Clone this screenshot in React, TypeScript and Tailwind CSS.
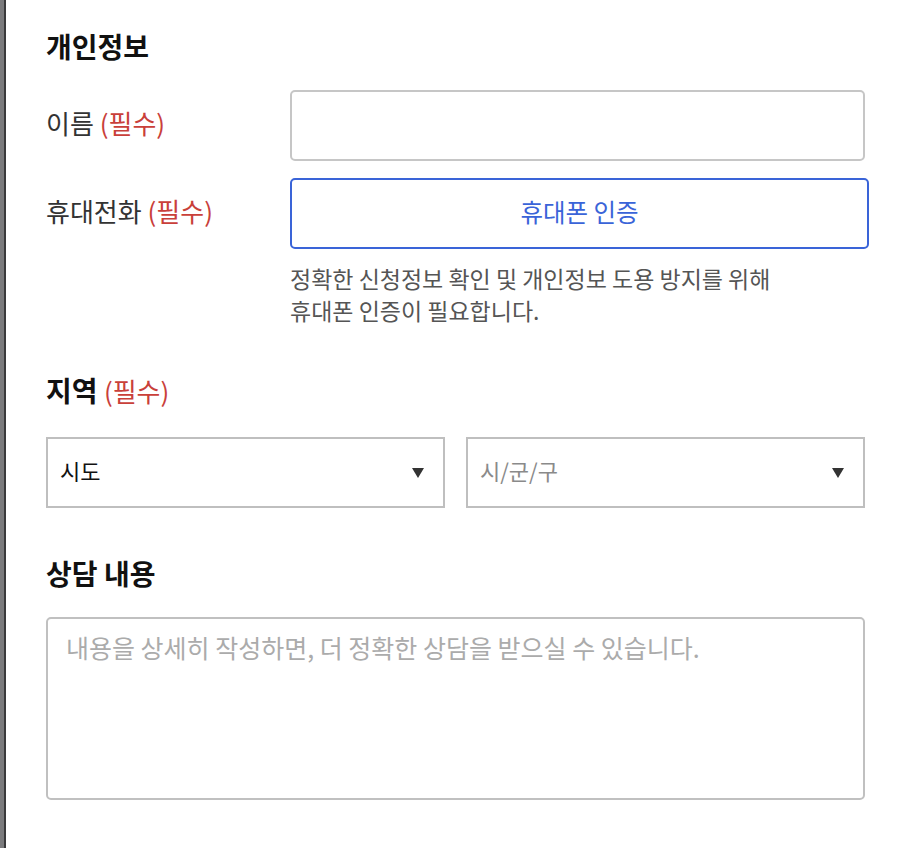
import { useState } from 'react';

const FONT = "font-['Noto_Sans_CJK_KR','Noto_Sans',sans-serif]";

function Required() {
  return <span className="font-normal text-[#c9403a]">(필수)</span>;
}

function SelectBox({ value, placeholder }: { value?: string; placeholder: string }) {
  return (
    <button
      type="button"
      className="flex-1 h-[71px] border-2 border-[#bfbfbf] bg-white flex items-center justify-between pl-[12px] pr-[19px] text-left"
    >
      <span className={`text-[22px] leading-[32px] pb-[5px] ${value ? 'text-[#111]' : 'text-[#8a8a8a]'}`}>
        {value ?? placeholder}
      </span>
      <svg width="12" height="10" viewBox="0 0 12 10" className="shrink-0">
        <path d="M0 0 H12 L6 10 Z" fill="#333" />
      </svg>
    </button>
  );
}

export default function App() {
  const [name, setName] = useState('');
  const [memo, setMemo] = useState('');

  return (
    <div className={`flex min-h-screen bg-white ${FONT}`}>
      {/* backdrop edge */}
      <div className="w-[6px] shrink-0 bg-[#7b7b7d] border-r-2 border-[#3a3a3c]" />

      <div className="pl-[40px] pt-[30px] w-[870px]">
        <h2 className="text-[28px] leading-[32px] font-bold text-[#111]">개인정보</h2>

        {/* 이름 */}
        <div className="mt-[28px] flex items-center">
          <label className="w-[244px] pb-[6px] text-[26px] leading-[32px] text-[#333]">
            이름 <Required />
          </label>
          <input
            value={name}
            onChange={e => setName(e.target.value)}
            className="w-[575px] h-[71px] border-2 border-[#c6c6c6] rounded-[5px] px-[16px] text-[24px] outline-none"
          />
        </div>

        {/* 휴대전화 */}
        <div className="mt-[17px] flex items-center">
          <label className="w-[244px] pb-[6px] text-[26px] leading-[32px] text-[#333]">
            휴대전화 <Required />
          </label>
          <button
            type="button"
            className="w-[579px] h-[71px] pb-[3px] border-2 border-[#3a64d8] rounded-[5px] text-[24.5px] text-[#3a64d8] bg-white"
          >
            휴대폰 인증
          </button>
        </div>
        <p className="mt-[13px] pl-[244px] text-[23px] leading-[32px] text-[#555]">
          정확한 신청정보 확인 및 개인정보 도용 방지를 위해
          <br />
          휴대폰 인증이 필요합니다.
        </p>

        {/* 지역 */}
        <h2 className="mt-[48px] text-[28px] leading-[32px] font-bold text-[#111]">
          지역 <span className="text-[26px]"><Required /></span>
        </h2>
        <div className="mt-[30px] w-[819px] flex gap-[21px]">
          <SelectBox value="시도" placeholder="시도" />
          <SelectBox placeholder="시/군/구" />
        </div>

        {/* 상담 내용 */}
        <h2 className="mt-[49px] text-[28px] leading-[32px] font-bold text-[#111]">상담 내용</h2>
        <textarea
          value={memo}
          onChange={e => setMemo(e.target.value)}
          placeholder="내용을 상세히 작성하면, 더 정확한 상담을 받으실 수 있습니다."
          className="mt-[28px] block w-[819px] h-[183px] border-2 border-[#c0c0c0] rounded-[5px] pl-[18px] pr-[18px] pt-[12px] text-[25px] leading-[32px] placeholder:text-[#ababab] outline-none resize-none"
        />
      </div>
    </div>
  );
}
